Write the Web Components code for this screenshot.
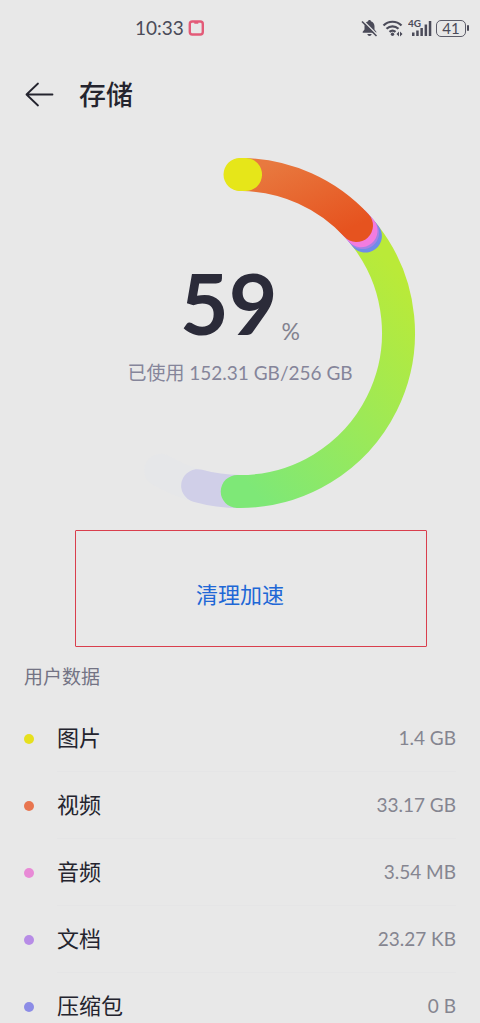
<!DOCTYPE html>
<html lang="zh-CN">

<head>
    <meta charset="utf-8">
    <meta name="viewport" content="width=device-width, initial-scale=1">
    <title>存储</title>
    <style>
        body {
            margin: 0;
            background: #e8e8e8;
            color: #24242e;
            font-family: Lato, "Noto Sans CJK SC", sans-serif;
        }
    </style>
</head>

<body>
    <storage-page>
        <status-bar slot="status" time="10:33" battery="41"></status-bar>
        <page-header slot="header">存储</page-header>
        <usage-ring percent="59">已使用 152.31 GB/256 GB</usage-ring>
        <clean-action>清理加速</clean-action>
        <data-section heading="用户数据">
            <data-row color="#e6e01e" value="1.4 GB">图片</data-row>
            <data-row color="#e8754f" value="33.17 GB">视频</data-row>
            <data-row color="#e88ad6" value="3.54 MB">音频</data-row>
            <data-row color="#b78ce6" value="23.27 KB">文档</data-row>
            <data-row color="#8c8ce6" value="0 B">压缩包</data-row>
        </data-section>
    </storage-page>
</body>

<script>
    (function () {

        // shared base: renders the markup of the class into an open shadow root
        class BaseElement extends HTMLElement {
            constructor() {
                super();
                this.attachShadow({ mode: 'open' });
            }

            connectedCallback() {
                const template = document.createElement('template');
                template.innerHTML = this.render();
                this.shadowRoot.replaceChildren(template.content.cloneNode(true));
            }
        }

        class StoragePage extends BaseElement {
            render() {
                return `
                <style>
                :host {
                    display: block;
                    height: 100vh;
                    overflow: hidden;
                }
                </style>
                <slot name="status"></slot>
                <slot name="header"></slot>
                <main><slot></slot></main>`;
            }
        }

        class StatusBar extends BaseElement {
            render() {
                return `
                <style>
                :host {
                    display: flex;
                    align-items: center;
                    justify-content: space-between;
                    height: 56px;
                    padding: 0 11px 0 135px;
                    color: #4b4b59;
                }
                div {
                    display: flex;
                    align-items: center;
                    gap: 4px;
                }
                .time {
                    font-size: 19px;
                    line-height: 24px;
                }
                .battery {
                    display: flex;
                    align-items: center;
                    gap: 1px;
                }
                .level {
                    box-sizing: border-box;
                    width: 30px;
                    height: 17px;
                    border: 1px solid #5c5c69;
                    border-radius: 5px;
                    font-size: 15px;
                    line-height: 15px;
                    text-align: center;
                }
                .tip {
                    width: 2px;
                    height: 6px;
                    border-radius: 1px;
                    background: #4b4b59;
                }
                svg {
                    display: block;
                }
                svg text {
                    font-size: 10px;
                    font-weight: bold;
                }
                </style>
                <div>
                    <span class="time">${this.getAttribute('time')}</span>
                    <svg width="16" height="16" viewBox="0 0 16 16" fill="none" stroke="#e35b78" stroke-width="2.4">
                        <rect x="1.8" y="1.5" width="13" height="13" rx="2.5"/>
                        <path d="M6.3 2.5h4" stroke-width="2.5"/>
                    </svg>
                </div>
                <div>
                    <svg width="17" height="18" viewBox="0 0 17 18">
                        <path fill="currentColor" d="M8.5 1c.8 0 1.3.5 1.4 1.2 2.4.7 3.6 2.7 3.6 5.1v3.2l1.8 2.3v1H1.7v-1l1.8-2.3V7.3c0-2.4 1.2-4.4 3.6-5.1C7.2 1.5 7.7 1 8.5 1zM6.3 15h4.4c-.3 1.2-1.1 1.9-2.2 1.9S6.6 16.2 6.3 15z"/>
                        <path stroke="#e8e8e8" stroke-width="1.5" d="M2 1.5l14 14"/>
                        <path stroke="currentColor" stroke-width="1.6" d="M1 2.5L15.5 17"/>
                    </svg>
                    <svg width="22" height="18" viewBox="0 0 22 18" fill="none" stroke="currentColor" stroke-width="2.2">
                        <path d="M1.5 6.5c5-5 13-5 18 0M4.5 9.8c3.5-3.3 8.5-3.3 12 0M7.5 12.9c1.8-1.6 4.2-1.6 6 0"/>
                        <circle cx="10.5" cy="15.2" r="1.7" fill="currentColor" stroke="none"/>
                        <path fill="currentColor" stroke="none" d="M17 12.5v5L14.5 15zM18 12.5v5l2.5-2.5z"/>
                    </svg>
                    <svg width="24" height="24" viewBox="0 -3 24 24" fill="currentColor">
                        <text x="0" y="8">4G</text>
                        <path d="M4 13.5h2.5V17H4zM8.2 11.5h2.5V17H8.2zM12.4 9h2.5v8h-2.5zM16.6 5.5h2.5V17h-2.5zM20.8 2h2.5v15h-2.5z"/>
                    </svg>
                    <span class="battery">
                        <span class="level">${this.getAttribute('battery')}</span>
                        <span class="tip"></span>
                    </span>
                </div>`;
            }
        }

        class PageHeader extends BaseElement {
            render() {
                return `
                <style>
                :host {
                    display: flex;
                    align-items: center;
                    gap: 24px;
                    height: 78px;
                    padding: 0 24px;
                }
                button {
                    padding: 0;
                    border: 0;
                    background: none;
                    color: inherit;
                    cursor: pointer;
                }
                svg {
                    display: block;
                }
                h1 {
                    margin: 0;
                    font-size: 27px;
                    font-weight: 500;
                    line-height: 40px;
                }
                </style>
                <button type="button" aria-label="返回">
                    <svg width="31" height="26" viewBox="0 0 31 26" fill="none" stroke="currentColor" stroke-width="1.8" stroke-linecap="round" stroke-linejoin="round">
                        <path d="M14 1.5L2.5 12.5 14 23.5M2.5 12.5h26"/>
                    </svg>
                </button>
                <h1><slot></slot></h1>`;
            }
        }

        class UsageRing extends BaseElement {
            // angles are in degrees, clockwise from the top of the ring
            arc(from, to, stroke) {
                const point = (deg) => {
                    const rad = deg * Math.PI / 180;
                    return (176 + 158.5 * Math.sin(rad)).toFixed(2) + ' ' + (176 - 158.5 * Math.cos(rad)).toFixed(2);
                };
                const large = to - from > 180 ? 1 : 0;
                return `<path d="M${point(from)}A158.5 158.5 0 ${large} 1 ${point(to)}" stroke="${stroke}"/>`;
            }

            render() {
                // drawn last to first, so each segment ends with a cap over the next one
                return `
                <style>
                :host {
                    display: grid;
                    place-items: center;
                    margin-top: 23px;
                }
                svg, .label {
                    grid-area: 1 / 1;
                }
                .label {
                    padding-bottom: 12px;
                    text-align: center;
                }
                .percent {
                    display: flex;
                    align-items: flex-end;
                    justify-content: center;
                    gap: 4px;
                }
                strong {
                    margin-bottom: 4px;
                    font-size: 84px;
                    line-height: 72px;
                    color: #2b2b39;
                }
                .percent span {
                    font-size: 23px;
                    line-height: 24px;
                    color: #82828f;
                }
                p {
                    margin: 16px 0 0;
                    font-size: 19px;
                    line-height: 28px;
                    color: #85859a;
                }
                </style>
                <svg width="352" height="352" viewBox="0 0 352 352" fill="none" stroke-width="33" stroke-linecap="round" aria-hidden="true">
                    <defs>
                        <linearGradient id="green" x1="0.8" y1="0" x2="0.1" y2="1">
                            <stop offset="0" stop-color="#baea38"/>
                            <stop offset="1" stop-color="#7ee877"/>
                        </linearGradient>
                        <linearGradient id="orange" x1="0" y1="0" x2="1" y2="1">
                            <stop offset="0" stop-color="#e8793f"/>
                            <stop offset="1" stop-color="#e6531f"/>
                        </linearGradient>
                    </defs>
                    ${this.arc(196, 210, '#e6e7e9')}
                    ${this.arc(180, 195.5, '#d0cfe8')}
                    ${this.arc(52, 181, 'url(#green)')}
                    ${this.arc(46, 52.3, '#6f8ce8')}
                    ${this.arc(46, 50.7, '#a582e6')}
                    ${this.arc(46, 49.8, '#f27ce0')}
                    ${this.arc(1, 47.3, 'url(#orange)')}
                    ${this.arc(0, 2, '#e6e619')}
                </svg>
                <div class="label">
                    <div class="percent"><strong>${this.getAttribute('percent')}</strong><span>%</span></div>
                    <p><slot></slot></p>
                </div>`;
            }
        }

        class CleanAction extends BaseElement {
            render() {
                return `
                <style>
                :host {
                    display: flex;
                    align-items: center;
                    justify-content: center;
                    box-sizing: border-box;
                    height: 117px;
                    margin: 21px 53px 0 75px;
                    padding: 12px 22px 0 0;
                    border: 1px solid #d93e4d;
                    border-radius: 1px;
                }
                button {
                    padding: 8px 16px;
                    border: 0;
                    background: none;
                    color: #2067d6;
                    font: inherit;
                    font-size: 22px;
                    line-height: 32px;
                    cursor: pointer;
                }
                </style>
                <button type="button"><slot></slot></button>`;
            }
        }

        class DataSection extends BaseElement {
            render() {
                return `
                <style>
                :host {
                    display: block;
                    padding: 16px 24px 0;
                }
                h2 {
                    margin: 0 0 14px;
                    font-size: 19px;
                    font-weight: normal;
                    line-height: 28px;
                    color: #737384;
                }
                </style>
                <h2>${this.getAttribute('heading')}</h2>
                <div role="list"><slot></slot></div>`;
            }
        }

        class DataRow extends BaseElement {
            connectedCallback() {
                this.setAttribute('role', 'listitem');
                super.connectedCallback();
            }

            render() {
                return `
                <style>
                :host {
                    display: flex;
                    align-items: center;
                    gap: 23px;
                }
                .dot {
                    width: 10px;
                    height: 10px;
                    border-radius: 50%;
                    background: ${this.getAttribute('color')};
                }
                .content {
                    flex: 1;
                    display: flex;
                    align-items: center;
                    justify-content: space-between;
                    height: 66px;
                    border-bottom: 1px solid #e5e5e6;
                }
                .name {
                    font-size: 22px;
                    line-height: 32px;
                }
                .value {
                    font-size: 19px;
                    line-height: 32px;
                    color: #858590;
                }
                </style>
                <span class="dot"></span>
                <div class="content">
                    <span class="name"><slot></slot></span>
                    <span class="value">${this.getAttribute('value')}</span>
                </div>`;
            }
        }

        customElements.define('storage-page', StoragePage);
        customElements.define('status-bar', StatusBar);
        customElements.define('page-header', PageHeader);
        customElements.define('usage-ring', UsageRing);
        customElements.define('clean-action', CleanAction);
        customElements.define('data-section', DataSection);
        customElements.define('data-row', DataRow);
    })();

</script>

</html>
